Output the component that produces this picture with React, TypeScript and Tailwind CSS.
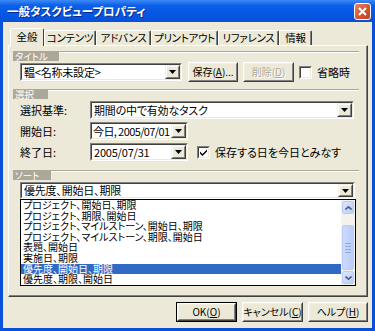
import React from "react";

const jp = "font-['Noto_Sans_CJK_JP',sans-serif] [font-feature-settings:'palt']";

const DropBtn = () => (
  <div className="w-[15px] h-full shrink-0 border border-t-[#f1efe2] border-l-[#f1efe2] border-b-[#404040] border-r-[#404040]">
    <div className="h-full border border-t-white border-l-white border-b-[#808080] border-r-[#808080] bg-[#ece9d8] flex items-center justify-center">
      <svg width="7" height="4" viewBox="0 0 7 4">
        <path d="M0 0h7L3.5 4z" fill="#000" />
      </svg>
    </div>
  </div>
);

const Combo = ({ text, className, textClass = "" }: { text: string; className: string; textClass?: string }) => (
  <div className={`border border-t-[#808080] border-l-[#808080] border-b-white border-r-white ${className}`}>
    <div className="h-full border border-t-[#404040] border-l-[#404040] border-b-[#ece9d8] border-r-[#ece9d8] bg-white flex items-center">
      <span className={`flex-1 min-w-0 pl-[2px] text-[11px] leading-[13px] whitespace-nowrap text-black tracking-[-0.2px] ${textClass}`}>{text}</span>
      <DropBtn />
    </div>
  </div>
);

const Button = ({ children, className, disabled }: { children: React.ReactNode; className: string; disabled?: boolean }) => (
  <div className={`border border-t-white border-l-white border-b-[#404040] border-r-[#404040] ${className}`}>
    <div className={`h-full border border-t-[#f1efe2] border-l-[#f1efe2] border-b-[#808080] border-r-[#808080] bg-[#ece9d8] flex items-center justify-center whitespace-nowrap text-[10px] leading-[12px] ${disabled ? "text-[#aca899] [text-shadow:1px_1px_0_#fff]" : "text-black"}`}>
      {children}
    </div>
  </div>
);

const CheckBox = ({ checked }: { checked?: boolean }) => (
  <div className="w-[13px] h-[13px] shrink-0 border border-t-[#808080] border-l-[#808080] border-b-white border-r-white">
    <div className="h-full border border-t-[#404040] border-l-[#404040] border-b-[#ece9d8] border-r-[#ece9d8] bg-white flex items-center justify-center">
      {checked && (
        <svg width="7" height="7" viewBox="0 0 7 7">
          <path d="M0 2.5l2.5 2.5L7 0.5v2L2.5 7 0 4.5z" fill="#000" />
        </svg>
      )}
    </div>
  </div>
);

const Group = ({ label, w }: { label: string; w: string }) => (
  <div className="flex items-start h-[10px] pl-[4px] pr-[8px]">
    <div className={`bg-[#aca899] text-white text-[9.5px] leading-[10px] h-[10px] pl-[2px] whitespace-nowrap ${w}`}>{label}</div>
    <div className="flex-1 h-[2px] border-t border-t-[#aca899] border-b border-b-white" />
  </div>
);

const ScrollBtn = ({ up }: { up?: boolean }) => (
  <div className="h-[13px] mx-[1px] rounded-[2px] border border-[#b9ccf5] bg-[linear-gradient(135deg,#dde7fd,#b9cdf9)] flex items-center justify-center">
    <svg width="7" height="4" viewBox="0 0 7 4">
      <path d={up ? "M0.5 3.5L3.5 0.8L6.5 3.5" : "M0.5 0.5L3.5 3.2L6.5 0.5"} fill="none" stroke="#4d6185" strokeWidth="1.6" />
    </svg>
  </div>
);

const items = [
  "プロジェクト、開始日、期限",
  "プロジェクト、期限、開始日",
  "プロジェクト、マイルストーン、開始日、期限",
  "プロジェクト、マイルストーン、期限、開始日",
  "表題、開始日",
  "実施日、期限",
  "優先度、開始日、期限",
  "優先度、期限、開始日",
];

const tabs = [
  { label: "コンテンツ", w: "w-[52px]" },
  { label: "アドバンス", w: "w-[55px]" },
  { label: "プリントアウト", w: "w-[67px]" },
  { label: "リファレンス", w: "w-[61px]" },
  { label: "情報", w: "w-[33px]" },
];

export default function App() {
  return (
    <div className={`w-[375px] h-[331px] bg-[#0a4fd9] flex flex-col ${jp}`}>
      {/* title bar */}
      <div className="h-[22px] shrink-0 bg-[linear-gradient(#3d8af5_0%,#0b5fe8_25%,#0556e3_70%,#0a4fd6_100%)] flex items-center pl-[7px] pr-[4px]">
        <span className="flex-1 text-white font-bold text-[11.5px] leading-[14px] [text-shadow:1px_1px_0_#0a2a8a]">一般タスクビュープロパティ</span>
        <div className="w-[17px] h-[17px] rounded-[3px] border border-white bg-[linear-gradient(135deg,#e9845f,#d5512b_60%,#c0401d)] flex items-center justify-center">
          <svg width="9" height="9" viewBox="0 0 9 9">
            <path d="M1 1l7 7M8 1L1 8" stroke="#fff" strokeWidth="2" />
          </svg>
        </div>
      </div>

      {/* body */}
      <div className="flex-1 mx-[3px] mb-[3px] bg-[#ece9d8] flex flex-col pt-[6px]">
        {/* tabs */}
        <div className="flex items-end h-[17px] pl-[7px] text-[10.5px] leading-[12px] text-black">
          <div className="relative z-10 w-[34px] h-[18px] -mb-[1px] bg-[#ece9d8] border-l border-t border-white border-r border-r-[#404040] rounded-t-[2px] flex items-center justify-center pb-[2px]">
            全般
          </div>
          {tabs.map((t) => (
            <div
              key={t.label}
              className={`${t.w} h-[15px] border-l border-t border-white border-r border-r-[#404040] rounded-t-[2px] shadow-[inset_-1px_0_0_#808080] flex items-center justify-center whitespace-nowrap tracking-[-0.3px]`}
            >
              {t.label}
            </div>
          ))}
        </div>

        {/* panel */}
        <div className="h-[252px] ml-[5px] mr-[4px] border-l border-t border-white border-r border-b border-r-[#404040] border-b-[#404040] shadow-[inset_-1px_-1px_0_#808080] flex flex-col pt-[5px] text-[11px] leading-[13px] text-black">
          <Group label="タイトル" w="w-[46px]" />
          <div className="flex items-center h-[20px] mt-[1px] pl-[11px]">
            <Combo text="鞰<名称未設定>" className="w-[162px] h-[18px]" />
            <Button className="w-[50px] h-[20px] ml-[6px]">
              保存(<u>A</u>)...
            </Button>
            <Button className="w-[51px] h-[20px] ml-[5px]" disabled>
              削除(<u>D</u>)
            </Button>
            <div className="ml-[5px]">
              <CheckBox />
            </div>
            <span className="ml-[5px]">省略時</span>
          </div>

          <div className="mt-[7px]">
            <Group label="選択" w="w-[35px]" />
          </div>
          <div className="flex items-center h-[18px] mt-[2px] pl-[11px]">
            <span className="w-[70px]">選択基準:</span>
            <Combo text="期間の中で有効なタスク" className="w-[264px] h-[18px]" />
          </div>
          <div className="flex items-center h-[18px] mt-[3px] pl-[11px]">
            <span className="w-[70px]">開始日:</span>
            <Combo text="今日, 2005/07/01" className="w-[98px] h-[18px]" textClass="text-[10.5px] !tracking-[-0.6px] !pl-[1px]" />
          </div>
          <div className="flex items-center h-[18px] mt-[3px] pl-[11px]">
            <span className="w-[70px]">終了日:</span>
            <Combo text="2005/07/31" className="w-[98px] h-[18px]" />
            <div className="ml-[9px]">
              <CheckBox checked />
            </div>
            <span className="ml-[5px]">保存する日を今日とみなす</span>
          </div>

          <div className="mt-[9px]">
            <Group label="ソート" w="w-[38px]" />
          </div>
          <div className="pl-[11px] mt-[2px]">
            <Combo text="優先度、開始日、期限" className="w-[335px] h-[17px]" />
            <div className="w-[336px] h-[87px] border border-black bg-white flex">
              <div className="flex-1 flex flex-col overflow-hidden">
                {items.map((it, i) => (
                  <div
                    key={it}
                    className={`h-[10.6px] shrink-0 pl-[2px] text-[10px] leading-[10.6px] whitespace-nowrap ${i === 6 ? "bg-[#316ac5] text-white" : "text-black"}`}
                  >
                    {it}
                  </div>
                ))}
              </div>
              <div className="w-[14px] bg-[#f3f2ec] flex flex-col py-[1px]">
                <ScrollBtn up />
                <div className="flex-1 flex flex-col">
                  <div className="mt-[11px] h-[45px] mx-[1px] rounded-[2px] border border-[#b9ccf5] bg-[linear-gradient(90deg,#cddafc,#b9cdf9)] flex flex-col items-center justify-center gap-[2px]">
                    <div className="w-[6px] h-[1px] bg-[#8fa7e3]" />
                    <div className="w-[6px] h-[1px] bg-[#8fa7e3]" />
                    <div className="w-[6px] h-[1px] bg-[#8fa7e3]" />
                    <div className="w-[6px] h-[1px] bg-[#8fa7e3]" />
                  </div>
                </div>
                <ScrollBtn />
              </div>
            </div>
          </div>
        </div>

        {/* buttons */}
        <div className="flex justify-end gap-[5px] mt-[5px] mr-[4px]">
          <div className="border border-black">
            <Button className="w-[59px] h-[18px]">
              OK(<u>O</u>)
            </Button>
          </div>
          <Button className="w-[61px] h-[20px]">
            キャンセル(<u>C</u>)
          </Button>
          <Button className="w-[60px] h-[20px]">
            ヘルプ(<u>H</u>)
          </Button>
        </div>
      </div>
    </div>
  );
}
